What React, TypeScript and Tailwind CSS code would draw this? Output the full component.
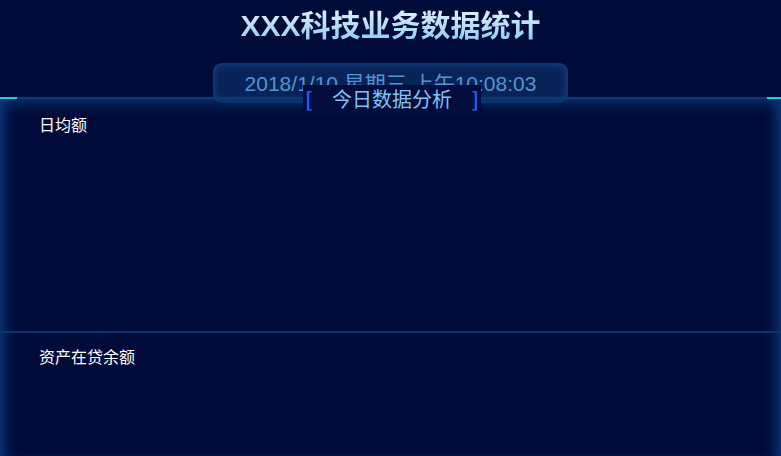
import React from "react";

const cjk = { fontFamily: '"Noto Sans CJK SC", "Noto Sans", sans-serif' };
const latin = { fontFamily: '"Liberation Sans", "Noto Sans CJK SC", sans-serif' };

export default function App() {
  return (
    <div
      className="w-[781px] h-[456px] overflow-hidden bg-[#000b3a] flex flex-col"
      style={cjk}
    >
      {/* Header */}
      <div className="h-[97px] shrink-0 flex flex-col items-center">
        <h1
          className="mt-[7px] text-[30px] leading-[38px] font-bold bg-gradient-to-b from-[#e2f4ff] to-[#86c9f0] bg-clip-text text-transparent"
          style={latin}
        >
          XXX科技业务数据统计
        </h1>
        <div className="mt-[18px] w-[355px] h-[40px] shrink-0 rounded-[9px] bg-[#082358] shadow-[inset_0_0_8px_1px_#17478a] flex items-center justify-center relative z-0">
          <span className="text-[21px] leading-[24px] text-[#5594d2] mt-[1px]" style={latin}>
            2018/1/10 星期三 上午10:08:03
          </span>
        </div>
      </div>

      {/* Main panel */}
      <div className="relative flex-1 flex flex-col border-t-2 border-[#0b3a72] shadow-[inset_14px_0_14px_-10px_#0c3e80,inset_-14px_0_14px_-10px_#0c3e80,inset_0_14px_14px_-10px_#0b3570] z-10">
        <div className="absolute -top-[2px] left-0 w-[17px] h-[2px] bg-[#2ec5ea]" />
        <div className="absolute -top-[2px] right-0 w-[14px] h-[2px] bg-[#2ec5ea]" />
        <div className="absolute -top-[14px] left-[303px] w-[178px] h-[27px] bg-[#020d3e] flex items-center justify-between px-[2px]">
          <span className="text-[20px] leading-[24px] font-bold text-[#1a62e6]">[</span>
          <span className="text-[20px] leading-[24px] text-[#7ec4f2]">今日数据分析</span>
          <span className="text-[20px] leading-[24px] font-bold text-[#1a62e6]">]</span>
        </div>

        <div className="h-[234px] shrink-0 border-b-2 border-[#0a3470] px-[39px] pt-[14px]">
          <div className="text-[16px] leading-[22px] text-white">日均额</div>
        </div>
        <div className="flex-1 px-[39px] pt-[12px]">
          <div className="text-[16px] leading-[22px] text-white">资产在贷余额</div>
        </div>
      </div>
    </div>
  );
}
